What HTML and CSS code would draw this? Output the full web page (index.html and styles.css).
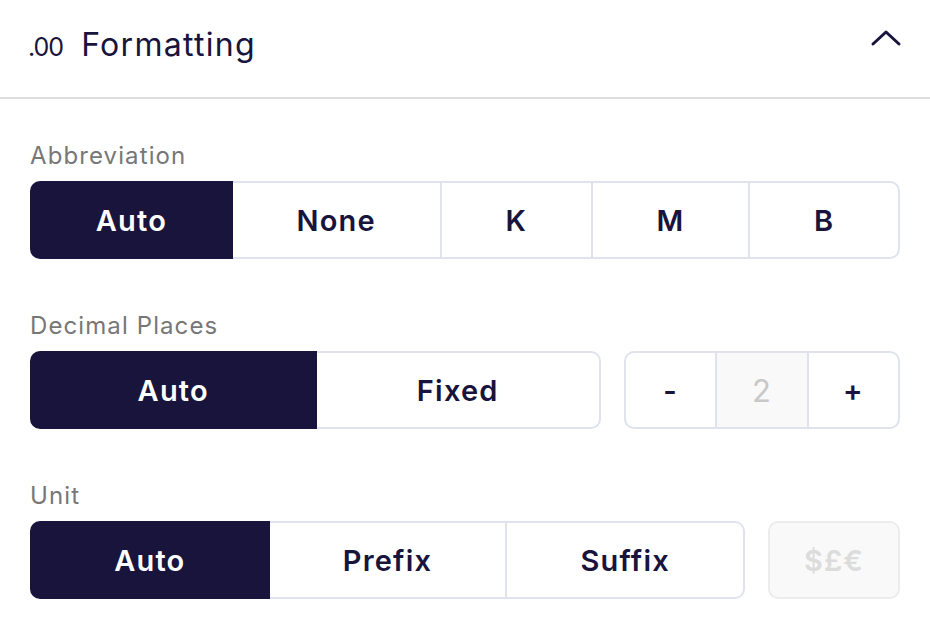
FILE: index.html
```html
<!DOCTYPE html>
<html lang="en">
<head>
    <meta charset="UTF-8">
    <title>Formatting</title>
    <link rel="stylesheet" href="styles.css">
</head>
<body>
    <div class="panel">
        <header class="panel-header">
            <div class="title">
                <span class="title-icon">.00</span>
                <span>Formatting</span>
            </div>
            <svg class="chevron" width="32" height="18" viewBox="0 0 32 18">
                <path d="M3 15 L16 3 L29 15" fill="none" stroke="#18143c" stroke-width="3" stroke-linecap="round" stroke-linejoin="round"/>
            </svg>
        </header>

        <section class="field">
            <div class="label">Abbreviation</div>
            <div class="row">
                <div class="seg-group grow">
                    <button class="seg active">Auto</button>
                    <button class="seg">None</button>
                    <button class="seg">K</button>
                    <button class="seg">M</button>
                    <button class="seg">B</button>
                </div>
            </div>
        </section>

        <section class="field">
            <div class="label">Decimal Places</div>
            <div class="row">
                <div class="seg-group grow even">
                    <button class="seg active">Auto</button>
                    <button class="seg">Fixed</button>
                </div>
                <div class="seg-group stepper">
                    <button class="seg">-</button>
                    <div class="seg value">2</div>
                    <button class="seg">+</button>
                </div>
            </div>
        </section>

        <section class="field">
            <div class="label">Unit</div>
            <div class="row">
                <div class="seg-group grow even">
                    <button class="seg active">Auto</button>
                    <button class="seg">Prefix</button>
                    <button class="seg">Suffix</button>
                </div>
                <button class="currency" disabled>$£€</button>
            </div>
        </section>
    </div>
</body>
</html>
```

FILE: styles.css
```css
body {
    margin: 0;
    font-family: Inter, "Noto Sans", sans-serif;
    background-color: #fff;
    color: #18143c;
}

.panel {
    width: 930px;
}

.panel-header {
    display: flex;
    align-items: center;
    justify-content: space-between;
    height: 97px;
    padding: 0 28px 0 28px;
    border-bottom: 2px solid #dedede;
    box-sizing: content-box;
}

.title {
    display: flex;
    align-items: baseline;
    gap: 18px;
    font-size: 32px;
    letter-spacing: 1.3px;
    margin-top: -8px;
}

.title-icon {
    font-size: 25px;
    letter-spacing: -1px;
}

.chevron {
    margin-top: -22px;
}

.field {
    padding: 0 30px;
}

.field:first-of-type {
    margin-top: 42px;
}

.field + .field {
    margin-top: 52px;
}

.label {
    font-size: 24px;
    line-height: 30px;
    letter-spacing: 1.1px;
    color: #777;
    margin-bottom: 10px;
}

.row {
    display: flex;
    gap: 23px;
}

.grow {
    flex: 1;
}

.seg-group {
    display: flex;
    height: 78px;
}

.seg {
    flex: 1 1 auto;
    display: flex;
    align-items: center;
    justify-content: center;
    box-sizing: border-box;
    height: 78px;
    padding: 0 35px;
    margin-left: -2px;
    border: 2px solid #e0e3ed;
    background-color: #fff;
    color: #18143c;
    font-family: inherit;
    font-size: 29px;
    font-weight: 600;
    letter-spacing: 1.2px;
}

.seg:first-child {
    margin-left: 0;
    border-radius: 10px 0 0 10px;
}

.seg:last-child {
    border-radius: 0 10px 10px 0;
}

.seg.active {
    background-color: #18143c;
    border-color: #18143c;
    color: #fff;
    position: relative;
}

.even .seg {
    flex: 1 1 0;
}

.stepper {
    width: 276px;
}

.stepper .seg {
    flex: 1 1 0;
    padding: 0;
}

.stepper .value {
    background-color: #f9f9f9;
    color: #c8c8c8;
    font-weight: 400;
    font-size: 31px;
}

.currency {
    box-sizing: border-box;
    width: 132px;
    height: 78px;
    border: 2px solid #ececec;
    border-radius: 10px;
    background-color: #f9f9f9;
    color: #dcdcdc;
    font-family: inherit;
    font-size: 29px;
    font-weight: 600;
    letter-spacing: 1px;
}
```
